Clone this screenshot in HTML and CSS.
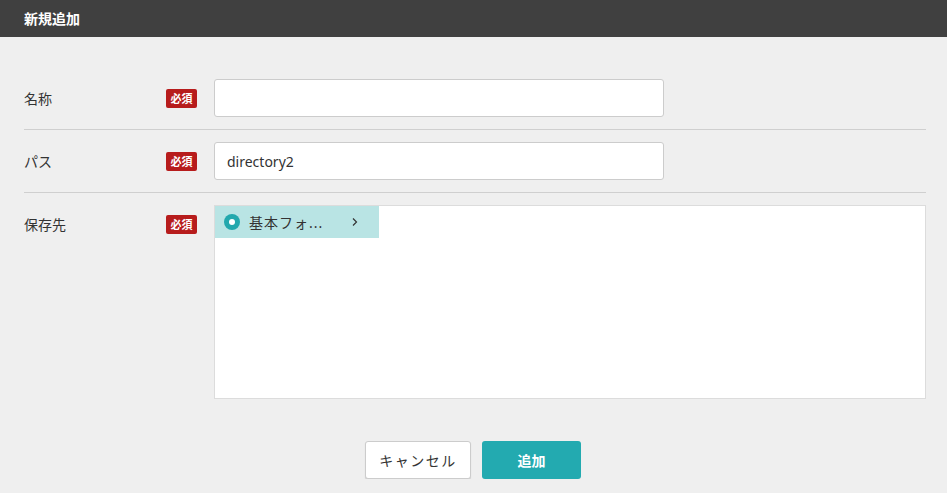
FILE: index.html
```html
<!DOCTYPE html>
<html lang="ja">
<head>
<meta charset="utf-8">
<link rel="stylesheet" href="styles.css">
</head>
<body>
<header class="header">新規追加</header>
<main class="form">
  <div class="row">
    <div class="label">名称</div>
    <div class="badge-cell"><span class="badge">必須</span></div>
    <div class="field"><input class="input" type="text" value=""></div>
  </div>
  <div class="row">
    <div class="label">パス</div>
    <div class="badge-cell"><span class="badge">必須</span></div>
    <div class="field"><input class="input" type="text" value="directory2"></div>
  </div>
  <div class="row row-last">
    <div class="label label-top">保存先</div>
    <div class="badge-cell badge-top"><span class="badge">必須</span></div>
    <div class="field">
      <div class="tree">
        <div class="tree-item">
          <span class="radio"><span class="radio-dot"></span></span>
          <span class="tree-text">基本フォ...</span>
          <svg class="chevron" width="8" height="10" viewBox="0 0 8 10"><path d="M2 1.5 L5.5 5 L2 8.5" fill="none" stroke="#333" stroke-width="1.2"/></svg>
        </div>
      </div>
    </div>
  </div>
  <div class="actions">
    <button class="btn btn-cancel">キャンセル</button>
    <button class="btn btn-add">追加</button>
  </div>
</main>
</body>
</html>
```
FILE: styles.css
```css
* { box-sizing: border-box; }
html, body {
  margin: 0;
  padding: 0;
  background: #efefef;
  font-family: "Noto Sans", "Noto Sans CJK JP", sans-serif;
  color: #333;
}
.header {
  height: 37px;
  line-height: 37px;
  background: #404040;
  color: #fff;
  font-size: 14px;
  font-weight: bold;
  padding-left: 24px;
}
.form {
  padding: 29px 21px 0 24px;
}
.row {
  display: grid;
  grid-template-columns: 142px 48px 1fr;
  align-items: center;
  padding: 13px 0 12px;
  border-bottom: 1px solid #cfcfcf;
}
.row + .row { padding-top: 12px; }
.row-last {
  border-bottom: none;
  align-items: start;
  padding-bottom: 0;
}
.label {
  font-size: 14px;
  color: #333;
}
.label-top { padding-top: 9px; }
.badge-top { padding-top: 10px; }
.badge-cell { display: flex; }
.badge {
  display: inline-block;
  background: #b71c1c;
  color: #fff;
  font-size: 11px;
  font-weight: bold;
  line-height: 19px;
  height: 19px;
  width: 31px;
  text-align: center;
  border-radius: 2px;
}
.input {
  display: block;
  width: 450px;
  height: 38px;
  border: 1px solid #cccccc;
  border-radius: 3px;
  background: #fff;
  padding: 0 12px;
  font-family: "Noto Sans", "Noto Sans CJK JP", sans-serif;
  font-size: 14px;
  color: #333;
  outline: none;
}
.tree {
  height: 194px;
  background: #fff;
  border: 1px solid #dcdcdc;
}
.tree-item {
  display: flex;
  align-items: center;
  width: 164px;
  height: 32px;
  background: #b9e4e4;
  padding-left: 9px;
}
.radio {
  width: 16px;
  height: 16px;
  border-radius: 50%;
  background: #23a8ad;
  display: flex;
  align-items: center;
  justify-content: center;
  flex: none;
}
.radio-dot {
  width: 6px;
  height: 6px;
  border-radius: 50%;
  background: #fff;
}
.tree-text {
  margin-left: 9px;
  font-size: 14px;
  color: #333;
  width: 98px;
  letter-spacing: 1px;
}
.chevron { margin-left: 4px; }
.actions {
  display: flex;
  justify-content: center;
  gap: 11px;
  margin: 42px 4px 0 0;
}
.btn {
  height: 38px;
  border-radius: 3px;
  font-family: "Noto Sans", "Noto Sans CJK JP", sans-serif;
  font-size: 14px;
  cursor: pointer;
  padding: 0;
}
.btn-cancel {
  width: 106px;
  background: #fff;
  border: 1px solid #cccccc;
  box-shadow: 0 1px 1px rgba(0,0,0,0.15);
  color: #333;
  letter-spacing: 1.5px;
}
.btn-add {
  width: 99px;
  background: #23aab0;
  border: none;
  color: #fff;
  font-weight: bold;
}
```
